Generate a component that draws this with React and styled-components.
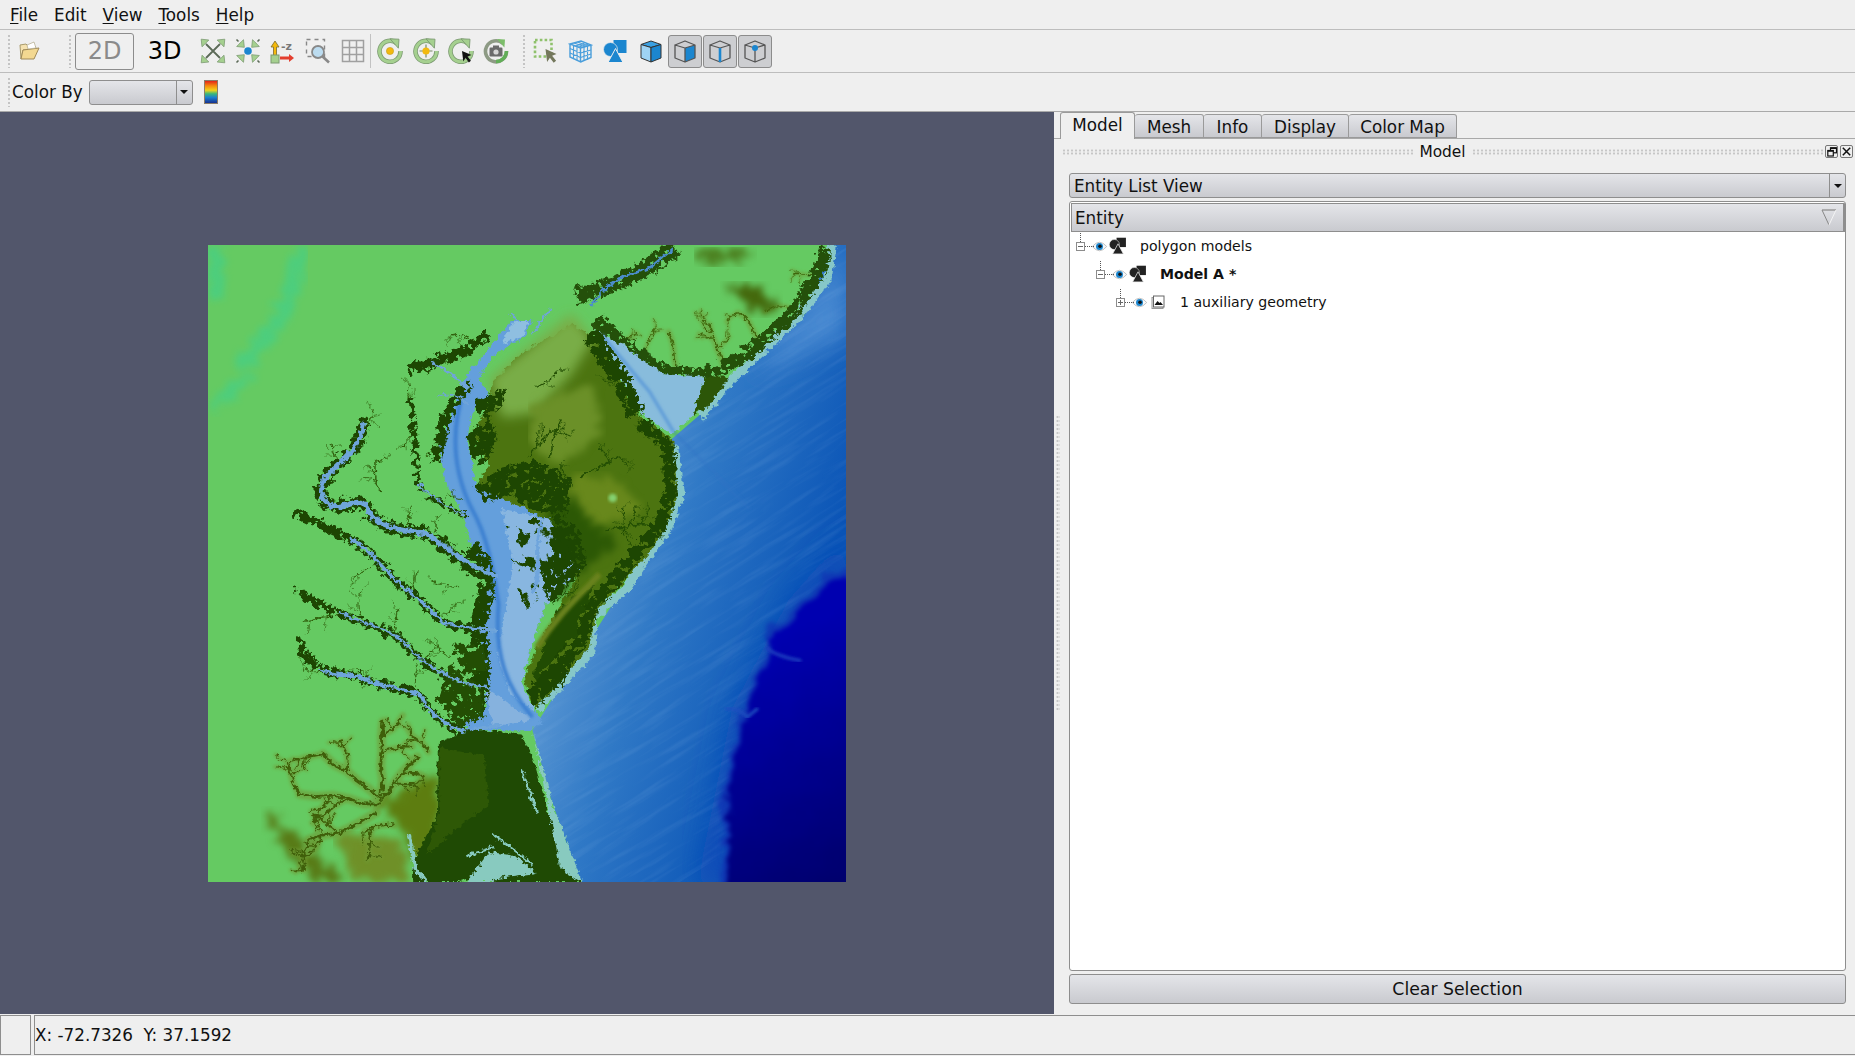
import React from 'react';
import styled, { createGlobalStyle } from 'styled-components';

const GlobalStyle = createGlobalStyle`
  html, body {
    margin: 0;
    padding: 0;
    background: #efefef;
    overflow: hidden;
  }
  * { box-sizing: border-box; }
`;

const bevel = 'linear-gradient(#e4e5e9, #c9cacf)';

const Window = styled.div`
  width: 1855px;
  height: 1056px;
  display: flex;
  flex-direction: column;
  background: #efefef;
  color: #111;
  font-family: 'DejaVu Sans', sans-serif;
  font-size: 16.8px;
`;

const MenuBar = styled.div`
  height: 30px;
  flex: none;
  display: flex;
  align-items: center;
  padding-left: 10px;
  gap: 16px;
  border-bottom: 1px solid #bdbdbd;
`;

const MenuItem = styled.span`
  u { text-underline-offset: 2px; }
`;

const ToolBar = styled.div`
  height: 43px;
  flex: none;
  display: flex;
  align-items: center;
  padding-left: 7px;
  border-bottom: 1px solid #bdbdbd;
`;

const Grip = styled.div`
  width: 5px;
  height: 34px;
  flex: none;
  margin-left: ${(p) => p.$left || 0}px;
  margin-right: ${(p) => p.$right || 0}px;
  background-image: radial-gradient(circle, #c4c4c4 1.1px, transparent 1.3px);
  background-size: 4px 4px;
`;

const Separator = styled.div`
  width: 1px;
  height: 34px;
  flex: none;
  background: #c2c2c2;
`;

const ModeButton = styled.div`
  width: 59px;
  height: 37px;
  flex: none;
  display: flex;
  align-items: center;
  justify-content: center;
  font-size: 24px;
  border-radius: 3px;
  color: ${(p) => (p.$active ? '#8a8a8a' : '#000')};
  border: ${(p) => (p.$active ? '1.5px solid #8c8c8c' : '1.5px solid transparent')};
  margin-right: ${(p) => p.$right || 0}px;
`;

const Tool = styled.div`
  width: ${(p) => p.$w || 35}px;
  height: 33px;
  flex: none;
  display: flex;
  align-items: center;
  justify-content: center;
`;

const ToggleTool = styled(Tool)`
  width: 34px;
  margin-right: 1px;
  background: #cdced1;
  border: 1px solid #8c8c8c;
  border-radius: 3px;
`;

const ColorRow = styled.div`
  height: 39px;
  flex: none;
  display: flex;
  align-items: center;
  padding-left: 7px;
  border-bottom: 1px solid #a9a9a9;
`;

const ColorGrip = styled(Grip)`
  height: 30px;
  margin-right: -5px;
`;

const ColorLabel = styled.span`
  margin-left: 5px;
  margin-right: 6px;
`;

const Combo = styled.div`
  display: flex;
  align-items: stretch;
  flex: none;
  width: ${(p) => (p.$wide ? 'auto' : '104px')};
  height: 25px;
  background: ${bevel};
  border: 1px solid #8e8e8e;
  border-radius: 3px;
`;

const ComboText = styled.span`
  flex: 1;
  padding-left: 4px;
  line-height: 25px;
`;

const ComboArrow = styled.div`
  width: 16px;
  flex: none;
  border-left: 1px solid #8e8e8e;
  display: flex;
  align-items: center;
  justify-content: center;
  &::after {
    content: '';
    border: 4px solid transparent;
    border-top: 4px solid #111;
    border-bottom: 0;
  }
`;

const ColorSwatch = styled.div`
  width: 14px;
  height: 24px;
  margin-left: 11px;
  border: 1px solid #8b7d68;
  background: linear-gradient(#e2231a, #f58a0c 22%, #f2d21a 42%, #3cb878 58%, #1b7fd0 75%, #17308f);
`;

const Main = styled.div`
  height: 902px;
  flex: none;
  display: flex;
`;

const Viewport = styled.div`
  width: 1054px;
  flex: none;
  background: #52566b;
  display: flex;
  align-items: center;
  justify-content: center;
`;

const Panel = styled.div`
  flex: 1;
  min-width: 0;
  display: flex;
  flex-direction: column;
`;

const TabBar = styled.div`
  height: 27px;
  flex: none;
  display: flex;
  align-items: flex-end;
  padding-left: 6px;
  border-bottom: 1px solid #a9a9a9;
  position: relative;
`;

const Tab = styled.div`
  width: ${(p) => p.$w}px;
  height: ${(p) => (p.$active ? 27 : 24)}px;
  margin-bottom: ${(p) => (p.$active ? -1 : 0)}px;
  text-align: center;
  line-height: 25px;
  background: ${(p) => (p.$active ? '#efefef' : bevel)};
  border: 1px solid #9a9a9a;
  border-left-width: ${(p) => (p.$active ? 1 : 0)}px;
  border-bottom: ${(p) => (p.$active ? 0 : undefined)};
  border-radius: 3px 3px 0 0;
  position: relative;
`;

const DockTitle = styled.div`
  height: 23px;
  flex: none;
  display: flex;
  align-items: center;
  padding-left: 8px;
  padding-right: 2px;
  padding-top: 2px;
  font-size: 15.4px;
`;

const DockGrip = styled.div`
  flex: 1;
  height: 6px;
  background-image: radial-gradient(circle, #c6c6c6 1px, transparent 1.2px);
  background-size: 4px 3px;
`;

const DockName = styled.span`
  margin: 0 6px;
`;

const DockButton = styled.div`
  width: 13px;
  height: 13px;
  flex: none;
  margin-left: 2px;
  border: 1px solid #777;
  border-radius: 2px;
  display: flex;
  align-items: center;
  justify-content: center;
`;

const DockBody = styled.div`
  flex: 1;
  min-height: 0;
  display: flex;
  padding-right: 9px;
`;

const Splitter = styled.div`
  width: 15px;
  flex: none;
  display: flex;
  align-items: center;
  padding-bottom: 52px;
  &::before {
    content: '';
    width: 4px;
    height: 295px;
    margin-left: 2px;
    background-image: radial-gradient(circle, #c6c6c6 1px, transparent 1.2px);
    background-size: 3px 4px;
  }
`;

const DockContent = styled.div`
  flex: 1;
  min-width: 0;
  display: flex;
  flex-direction: column;
  padding-top: 11px;
`;

const TreeBox = styled.div`
  margin-top: 3px;
  height: 770px;
  flex: none;
  background: #fff;
  border: 1px solid #8e8e8e;
  border-radius: 3px;
  overflow: hidden;
`;

const TreeHeader = styled.div`
  height: 29px;
  margin: 1px 0 0 1px;
  display: flex;
  align-items: center;
  justify-content: space-between;
  padding: 0 6px 0 3px;
  background: ${bevel};
  border: 1px solid #8e8e8e;
  border-width: 1px 2px 1px 1px;
`;

const TreeRow = styled.div`
  height: 28px;
  display: flex;
  align-items: center;
  padding-left: ${(p) => 6 + p.$depth * 20}px;
  font-size: 14.1px;
  font-weight: ${(p) => (p.$bold ? 700 : 400)};
`;

const Expander = styled.div`
  width: 9px;
  height: 9px;
  flex: none;
  border: 1px solid #8c8c8c;
  position: relative;
  &::before {
    content: '';
    position: absolute;
    left: 3px;
    top: -10px;
    height: 9px;
    border-left: 1px dotted #555;
  }
  &::after {
    content: '';
    position: absolute;
    left: 8px;
    top: 3px;
    width: 9px;
    border-top: 1px dotted #555;
  }
`;

const ExpanderMark = styled.div`
  position: absolute;
  left: 1px;
  top: 3px;
  width: 5px;
  height: 1px;
  background: #666;
  ${(p) => p.$plus && `
    &::after {
      content: '';
      position: absolute;
      left: 2px;
      top: -2px;
      width: 1px;
      height: 5px;
      background: #666;
    }
  `}
`;

const RowEye = styled.div`
  margin-left: 7px;
  width: 15px;
  flex: none;
  display: flex;
`;

const RowIcon = styled.div`
  width: 18px;
  margin-left: 2px;
  flex: none;
  display: flex;
  justify-content: center;
`;

const RowLabel = styled.span`
  margin-left: 13px;
  white-space: nowrap;
`;

const ClearButton = styled.div`
  height: 30px;
  margin-top: 3px;
  flex: none;
  text-align: center;
  line-height: 28px;
  font-size: 17.3px;
  background: ${bevel};
  border: 1px solid #8e8e8e;
  border-radius: 3px;
`;

const StatusBar = styled.div`
  flex: 1;
  display: flex;
  gap: 3px;
  padding: 1px 0;
`;

const StatusCell = styled.div`
  width: ${(p) => (p.$fill ? 'auto' : '31px')};
  flex: ${(p) => (p.$fill ? 1 : 'none')};
  display: flex;
  align-items: center;
  border: 1px solid #8e8e8e;
  border-width: 1px 0 1px 1px;
  ${(p) => !p.$fill && 'border-right-width: 1px;'}
`;

/* ---------- toolbar icons ---------- */

const green = '#a5d08f';
const greenEdge = '#7c9a72';
const blue = '#1b86cf';

const FolderIcon = () => (
  <svg width="24" height="24" viewBox="0 0 24 24">
    <path d="M3 6l6-1 2 2 7 0 1 3-13 1-2 9z" fill="#f5e2b0" stroke="#a89a6c" />
    <path d="M6 11l16-2-5 11H4z" fill="#f3d891" stroke="#a08a58" />
    <path d="M10 6l7-3 2 6-8 1z" fill="#fff" stroke="#b0a888" strokeWidth=".7" />
  </svg>
);

const Head = ({ x, y, r }) => (
  <path d="M-6 -6L3.5 -5 .8 -2.2 -2.2 .8 -5 3.5z" transform={`translate(${x} ${y}) rotate(${r}) scale(.8)`} fill={green} stroke={greenEdge} strokeWidth="1" />
);

const FitIcon = () => (
  <svg width="26" height="26" viewBox="0 0 26 26">
    <path d="M6 6L20 20M20 6L6 20" stroke="#5c6a58" strokeWidth="1.8" />
    <Head x={6} y={6} r={0} />
    <Head x={20} y={6} r={90} />
    <Head x={20} y={20} r={180} />
    <Head x={6} y={20} r={270} />
  </svg>
);

const ShrinkIcon = () => (
  <svg width="26" height="26" viewBox="0 0 26 26">
    <Head x={4.5} y={4.5} r={180} />
    <Head x={21.5} y={4.5} r={270} />
    <Head x={21.5} y={21.5} r={0} />
    <Head x={4.5} y={21.5} r={90} />
    <path d="M1.5 1.5L3.5 3.5M24.5 1.5L22.5 3.5M24.5 24.5L22.5 22.5M1.5 24.5L3.5 22.5" stroke="#5c6a58" strokeWidth="1.6" />
    <circle cx="13" cy="13" r="3.8" fill={blue} />
  </svg>
);

const AxesIcon = () => (
  <svg width="26" height="26" viewBox="0 0 26 26">
    <path d="M5 3L1 9h2.5v9h3V9H9z" fill="#f4b90c" stroke="#7a6a30" strokeWidth=".8" />
    <path d="M10 18.5h9V16l5 4-5 4v-2.5h-9z" fill="#e33e2e" />
    <rect x="1" y="17" width="8" height="8" fill={green} stroke={greenEdge} />
    <text x="11" y="12" fontSize="11" fontFamily="DejaVu Sans" fontWeight="700" fill="#777">-z</text>
  </svg>
);

const ZoomIcon = () => (
  <svg width="26" height="26" viewBox="0 0 26 26">
    <rect x="1.5" y="1.5" width="18" height="17" fill="none" stroke="#888" strokeWidth="1.4" strokeDasharray="4 4" />
    <circle cx="13" cy="14" r="6" fill="#bcdcf0" stroke="#888" strokeWidth="1.8" />
    <path d="M17.5 18.5L24 24.5" stroke="#888" strokeWidth="2.6" />
  </svg>
);

const GridIcon = () => (
  <svg width="24" height="24" viewBox="0 0 24 24">
    <path d="M1.5 1.5h21v21h-21zM1.5 8.5h21M1.5 15.5h21M8.5 1.5v21M15.5 1.5v21" fill="none" stroke="#a0a0a0" strokeWidth="1.5" />
  </svg>
);

const Ring = ({ children }) => (
  <svg width="26" height="26" viewBox="0 0 26 26">
    <path d="M20 5.5A10.5 10.5 0 1 0 23.5 13" fill="none" stroke={greenEdge} strokeWidth="4.6" />
    <path d="M20 5.5A10.5 10.5 0 1 0 23.5 13" fill="none" stroke={green} strokeWidth="3" />
    <path d="M13 .8l9 .4-.6 9z" fill={green} stroke={greenEdge} strokeWidth=".9" />
    {children}
  </svg>
);

const RotateDot = () => (
  <Ring><circle cx="13" cy="13" r="3.6" fill="#f2b90f" stroke="#c29a20" strokeWidth=".6" /></Ring>
);

const RotateTarget = () => (
  <Ring>
    <path d="M13 6.5v13M6.5 13h13" stroke="#7a8a68" strokeWidth="1.2" />
    <circle cx="13" cy="13" r="3.6" fill="#f2b90f" />
  </Ring>
);

const RotatePointer = () => (
  <Ring><path d="M14 13l9.5 4-4 1.4 3.4 4.4-2 1.6-3.4-4.6-2.2 3.6z" fill="#111" /></Ring>
);

const RotateCamera = () => (
  <svg width="26" height="26" viewBox="0 0 26 26">
    <path d="M20 5.5A10.5 10.5 0 1 0 23.5 13" fill="none" stroke="#8d9a84" strokeWidth="3.6" />
    <path d="M23.5 13A10.5 10.5 0 0 1 13 23.5" fill="none" stroke="#62ae58" strokeWidth="3.4" />
    <path d="M14 1l8 .6-.6 8z" fill="#7cbd6a" />
    <rect x="6.5" y="9.5" width="13" height="9" rx="1.2" fill="#6b6b6b" />
    <rect x="10" y="7.5" width="6" height="3" fill="#6b6b6b" />
    <circle cx="13" cy="14" r="2.6" fill="#d6d6d6" />
  </svg>
);

const SelectIcon = () => (
  <svg width="26" height="26" viewBox="0 0 26 26">
    <rect x="2" y="2" width="16.5" height="16.5" fill="none" stroke="#8fc16c" strokeWidth="2.6" strokeDasharray="2.6 2.2" />
    <path d="M12.5 11l11 5-4.4 1.8 4 5-2.4 2-3.8-5-2.8 4.2z" fill="#74785c" />
  </svg>
);

const MeshIcon = () => (
  <svg width="25" height="25" viewBox="0 0 25 25" fill="none" stroke="#4a9edb" strokeWidth="1.1">
    <path d="M12.5 9L23 6 13 2 2 5zM2 5v13l10.5 5V9M23 6v12.5L12.5 23" strokeWidth="1.4" />
    <path d="M5.5 6.7v13M9 8.2v13M2 9.5l10.5 4.4M2 14l10.5 4.4M16 8v14M19.5 7v13.7M12.5 14L23 11M12.5 18.5L23 15M6 4l11 3.8M9.5 3l10.5 4M6.5 7.3l10-3M10 8.2l10-3" />
  </svg>
);

const ShapesIcon = ({ color = blue, size = 25 }) => (
  <svg width={size} height={size} viewBox="0 0 25 25">
    <rect x="10.5" y="1" width="13" height="13" fill={color} />
    <circle cx="7.5" cy="10.5" r="7" fill={color} stroke="#efefef" strokeWidth=".7" />
    <path d="M12.5 9.5L20 23.5H5z" fill={color} stroke="#efefef" strokeWidth="1" />
  </svg>
);

const CubeIcon = () => (
  <svg width="24" height="25" viewBox="0 0 24 25">
    <path d="M12 8.5L22 5.5 12 2 2 5.5z" fill="#3aa0e2" stroke="#333" strokeLinejoin="round" />
    <path d="M2 5.5l10 3V23L2 19z" fill="#9ed3f4" stroke="#333" strokeLinejoin="round" />
    <path d="M22 5.5l-10 3V23l10-4z" fill={blue} stroke="#333" strokeLinejoin="round" />
  </svg>
);

const BoxIcon = ({ mode }) => (
  <svg width="24" height="25" viewBox="0 0 24 25">
    {mode === 'face' && <path d="M22 6l-10 3v14l10-4z" fill={blue} />}
    <path d="M12 9L22 6 12 2 2 6zM2 6l10 3v14L2 19zM22 6v13l-10 4" fill="none" stroke="#555" strokeWidth="1.3" strokeLinejoin="round" />
    {mode === 'edge' && <path d="M12 9v14" stroke={blue} strokeWidth="2.6" />}
    {mode === 'point' && <circle cx="12" cy="9" r="3" fill={blue} />}
  </svg>
);

const EyeIcon = () => (
  <svg width="15" height="11" viewBox="0 0 15 11">
    <path d="M.3 5.5Q7.5 -3 14.7 5.5Q7.5 14 .3 5.5z" fill="#f6f8fa" stroke="#b4b4b4" strokeWidth=".8" />
    <circle cx="7.5" cy="5.5" r="3.5" fill={blue} />
    <circle cx="8" cy="5.2" r="1.8" fill="#111" />
  </svg>
);

const PictureIcon = () => (
  <svg width="14" height="14" viewBox="0 0 14 14">
    <rect x="1" y="2.5" width="11" height="11" fill="#e6e6e6" stroke="#999" />
    <rect x="2.5" y="1" width="10.5" height="11" fill="#fff" stroke="#666" />
    <path d="M3.5 10l3-4 2 2 1-1 2.5 3z" fill="#111" />
  </svg>
);

const SortIcon = () => (
  <svg width="16" height="17" viewBox="0 0 16 17">
    <path d="M1 1h14" stroke="#9a9a9a" strokeWidth="1.4" />
    <path d="M1 1l7 15" stroke="#888" strokeWidth="1" />
    <path d="M15 1L8 16" stroke="#f4f4f4" strokeWidth="1" />
  </svg>
);

const FloatIcon = () => (
  <svg width="10" height="10" viewBox="0 0 10 10" fill="none" stroke="#111" strokeWidth="1.2">
    <rect x="3.5" y=".8" width="6" height="5" />
    <rect x=".8" y="3.5" width="5.5" height="5.5" fill="#efefef" />
    <path d="M3.5 1.2h6M.8 4h5.5" strokeWidth="1.6" />
  </svg>
);

const CloseIcon = () => (
  <svg width="9" height="9" viewBox="0 0 9 9">
    <path d="M.8 .8L8.2 8.2M8.2 .8L.8 8.2" stroke="#111" strokeWidth="1.5" />
  </svg>
);

/* ---------- terrain picture, coordinates follow the 3x crop ---------- */

// small seeded random so the drainage looks the same every run
let seed = 41;
const rnd = () => {
  seed = (seed * 1664525 + 1013904223) % 4294967296;
  return seed / 4294967296;
};

// grows a branching stream from (x, y) heading along angle (degrees)
const dendrite = (x, y, angle, len, depth, out) => {
  const steps = 5;
  const stepLen = len / steps;
  let a = (angle * Math.PI) / 180;
  let cx = x;
  let cy = y;
  let d = `M${x.toFixed(0)} ${y.toFixed(0)}`;
  for (let i = 0; i < steps; i += 1) {
    a += (rnd() - 0.5) * 0.7;
    cx += Math.cos(a) * stepLen;
    cy += Math.sin(a) * stepLen;
    d += `L${cx.toFixed(0)} ${cy.toFixed(0)}`;
    if (depth > 0 && i > 0 && rnd() > 0.3) {
      const side = rnd() > 0.5 ? 1 : -1;
      dendrite(cx, cy, (a * 180) / Math.PI + side * (35 + rnd() * 35), len * 0.42, depth - 1, out);
    }
  }
  out.push({ d, w: depth + 1.5 });
};

const grow = (list) => {
  const out = [];
  list.forEach(([x, y, a, len, depth]) => dendrite(x, y, a, len, depth, out));
  return out;
};

const rivers = [
  { d: 'M400 445C395 500 350 530 320 560C292 595 300 630 340 636C380 628 395 610 412 645C435 682 480 690 540 695C590 722 625 765 705 795', w: 11 },
  { d: 'M372 710C410 730 440 770 470 800C510 840 550 860 580 900C620 915 650 915 705 920', w: 7 },
  { d: 'M345 880C400 900 440 915 482 935C530 990 590 1040 690 1052', w: 5 },
  { d: 'M300 1012C330 1025 360 1020 385 1025C430 1050 500 1055 532 1068C550 1112 590 1140 630 1152L710 1140', w: 8 },
  { d: 'M528 585C570 622 600 642 636 656', w: 4 },
  { d: 'M560 305C590 320 620 340 640 360', w: 6 },
  { d: 'M575 380C600 372 625 380 640 400', w: 4 },
  { d: 'M740 190L760 215', w: 4 },
  { d: 'M830 180L790 235', w: 4 },
];

const fringes = [
  ['M400 445C395 500 350 530 320 560C292 595 300 630 340 636C380 628 395 610 412 645C435 682 480 690 540 695C590 722 625 765 660 780', 28],
  ['M250 650C300 680 340 695 372 710C410 730 440 770 470 800C510 840 550 860 580 900C620 915 650 915 680 920', 20],
  ['M250 830C300 870 400 900 482 935C530 990 590 1040 660 1052', 18],
  ['M255 945C265 1000 310 1020 385 1025C430 1050 500 1055 532 1068C550 1112 590 1140 630 1152', 18],
  ['M510 390C522 470 520 540 530 592C570 622 600 642 636 656', 12],
  ['M520 315C570 300 620 290 680 245', 26],
  ['M640 360C590 400 580 470 570 520', 26],
  ['M660 740C690 780 690 830 665 900C670 960 680 1020 660 1100', 40],
];

const westStreams = grow([
  [395, 470, -60, 60, 1], [350, 530, 200, 50, 1], [440, 600, -110, 70, 2], [500, 680, -70, 50, 1], [560, 700, -60, 45, 1],
  [440, 770, 190, 70, 1], [510, 840, -60, 55, 1], [580, 890, -60, 50, 1], [620, 820, 200, 60, 1],
  [400, 900, -120, 70, 1], [470, 925, -70, 55, 1], [540, 1000, -70, 55, 1], [350, 880, 170, 90, 1],
  [330, 1020, 200, 70, 1], [440, 1050, 210, 70, 1], [520, 1060, -100, 60, 1], [600, 980, 210, 60, 1],
  [510, 400, -100, 50, 1], [515, 470, 170, 35, 1], [545, 520, -50, 50, 1],
  [660, 250, 200, 60, 1], [600, 300, 160, 50, 1], [630, 620, -150, 40, 1],
]);

const jerseyStreams = grow([
  [1050, 280, -80, 60, 1], [1120, 310, -90, 80, 2], [1230, 310, -90, 100, 2], [1310, 250, -130, 80, 2],
  [1390, 180, -160, 70, 1], [1440, 100, -170, 45, 1], [1000, 250, -30, 35, 1],
]);

const delmarvaStreams = grow([
  [900, 570, -50, 100, 2], [960, 690, -20, 100, 2], [1000, 700, -60, 60, 1], [830, 520, -70, 90, 2],
  [780, 520, -60, 80, 2], [800, 360, -30, 60, 1], [1060, 480, -120, 50, 1], [1000, 360, -150, 50, 1],
  [870, 590, -120, 50, 1], [850, 850, -50, 50, 1],
]);

const virginiaStreams = grow([
  [440, 1320, 195, 190, 2], [440, 1310, 235, 170, 2], [440, 1300, 272, 170, 2], [440, 1310, -45, 130, 2],
  [430, 1340, 165, 170, 2], [470, 1370, 170, 70, 1], [420, 1380, 120, 70, 1], [550, 1200, 220, 70, 1],
]);

const Streams = ({ list, color, scale = 1 }) => (
  <g fill="none" stroke={color} strokeLinecap="round" strokeLinejoin="round">
    {list.map((s, i) => <path key={i} d={s.d} strokeWidth={s.w * scale} />)}
  </g>
);

const TerrainMap = () => (
  <svg width="638" height="637" viewBox="42 32 1471 1468" preserveAspectRatio="none">
    <defs>
      <filter id="rough" x="-5%" y="-5%" width="110%" height="110%" colorInterpolationFilters="sRGB">
        <feTurbulence type="fractalNoise" baseFrequency="0.035" numOctaves="4" seed="7" result="n" />
        <feDisplacementMap in="SourceGraphic" in2="n" scale="34" xChannelSelector="R" yChannelSelector="G" />
      </filter>
      <filter id="fine" x="-5%" y="-5%" width="110%" height="110%" colorInterpolationFilters="sRGB">
        <feTurbulence type="fractalNoise" baseFrequency="0.09" numOctaves="3" seed="3" result="n" />
        <feDisplacementMap in="SourceGraphic" in2="n" scale="16" xChannelSelector="R" yChannelSelector="G" />
      </filter>
      <filter id="speckle" x="-5%" y="-5%" width="110%" height="110%" colorInterpolationFilters="sRGB">
        <feTurbulence type="fractalNoise" baseFrequency="0.07" numOctaves="4" seed="11" result="n" />
        <feDisplacementMap in="SourceGraphic" in2="n" scale="30" xChannelSelector="R" yChannelSelector="G" result="moved" />
        <feColorMatrix in="n" type="matrix" values="0 0 0 0 0  0 0 0 0 0  0 0 0 0 0  16 0 0 0 -5" result="mask" />
        <feComposite in="moved" in2="mask" operator="in" />
      </filter>
      <filter id="sparse" x="-15%" y="-15%" width="130%" height="130%" colorInterpolationFilters="sRGB">
        <feTurbulence type="fractalNoise" baseFrequency="0.028" numOctaves="5" seed="23" result="n" />
        <feDisplacementMap in="SourceGraphic" in2="n" scale="70" xChannelSelector="G" yChannelSelector="R" result="moved" />
        <feColorMatrix in="n" type="matrix" values="0 0 0 0 0  0 0 0 0 0  0 0 0 0 0  18 0 0 0 -9.6" result="mask" />
        <feComposite in="moved" in2="mask" operator="in" />
      </filter>
      <filter id="mottle" x="-5%" y="-5%" width="110%" height="110%" colorInterpolationFilters="sRGB">
        <feTurbulence type="fractalNoise" baseFrequency="0.05" numOctaves="3" seed="5" result="n" />
        <feDisplacementMap in="SourceGraphic" in2="n" scale="60" xChannelSelector="R" yChannelSelector="G" />
        <feGaussianBlur stdDeviation="8" />
      </filter>
      <filter id="stairs" x="-5%" y="-5%" width="110%" height="110%" colorInterpolationFilters="sRGB">
        <feTurbulence type="fractalNoise" baseFrequency="0.02" numOctaves="4" seed="31" result="n" />
        <feDisplacementMap in="SourceGraphic" in2="n" scale="50" xChannelSelector="R" yChannelSelector="G" />
        <feGaussianBlur stdDeviation="5" />
      </filter>
      <filter id="streaks" colorInterpolationFilters="sRGB">
        <feTurbulence type="fractalNoise" baseFrequency="0.006 0.08" numOctaves="3" seed="9" />
        <feColorMatrix type="matrix" values="0 0 0 0 .8  0 0 0 0 .9  0 0 0 0 1  3 0 0 0 -1.35" />
        <feGaussianBlur stdDeviation="1" />
      </filter>
      <filter id="soft"><feGaussianBlur stdDeviation="14" /></filter>
      <filter id="softer"><feGaussianBlur stdDeviation="30" /></filter>
      <filter id="edge"><feGaussianBlur stdDeviation="4" /></filter>
      <linearGradient id="sea" gradientUnits="userSpaceOnUse" x1="880" y1="560" x2="1480" y2="760">
        <stop offset="0" stopColor="#6aa2d8" />
        <stop offset=".45" stopColor="#3079c6" />
        <stop offset="1" stopColor="#0a54b6" />
      </linearGradient>
      <linearGradient id="deep" gradientUnits="userSpaceOnUse" x1="1250" y1="1000" x2="1513" y2="1500">
        <stop offset="0" stopColor="#0000b0" />
        <stop offset="1" stopColor="#00006c" />
      </linearGradient>
      <clipPath id="oceanClip">
        <path d="M1480 32H1513V1500H900L830 1300 790 1150 1000 820 1120 620 1110 480 1180 420 1300 290 1420 190z" />
      </clipPath>
      <clipPath id="frame">
        <rect x="42" y="32" width="1471" height="1468" />
      </clipPath>
    </defs>

    <g clipPath="url(#frame)">
      <rect x="42" y="32" width="1471" height="1468" fill="#65ca62" />
      <g filter="url(#mottle)" fill="none" stroke="#47cf84" opacity=".8" strokeLinecap="round">
        <path d="M60 50L60 140" strokeWidth="36" />
        <path d="M260 50L215 190 130 300" strokeWidth="38" />
        <path d="M50 410L130 340" strokeWidth="22" />
      </g>

      {/* ocean */}
      <path d="M1480 32H1513V1500H900L830 1300 790 1150 1000 820 1120 620 1110 480 1180 420 1300 290 1420 190z" fill="url(#sea)" />
      <path d="M1513 30V240L1300 330 1420 170z" fill="#4a8ad2" filter="url(#softer)" clipPath="url(#oceanClip)" />
      <path d="M1513 700V1000L1260 1500H1170L1250 1100 1380 850z" fill="#0a4cb8" filter="url(#softer)" />
      <g clipPath="url(#oceanClip)">
        <rect x="600" y="-200" width="1400" height="1400" transform="rotate(-32 1200 700)" filter="url(#streaks)" opacity=".07" />
      </g>
      <path d="M1640 770L1470 790 1390 870 1320 930 1335 965 1280 1090 1240 1230 1215 1640H1640z" fill="#1034b4" filter="url(#stairs)" opacity=".8" />
      <path d="M1640 795L1480 802 1400 880 1330 940 1345 965 1290 1090 1250 1230 1228 1640H1640z" fill="url(#deep)" filter="url(#stairs)" />
      <path d="M1235 1100Q1270 1100 1285 1120L1310 1100" fill="none" stroke="#1f50c0" strokeWidth="7" filter="url(#edge)" />
      <path d="M1330 960Q1350 980 1410 990" fill="none" stroke="#1f40c0" strokeWidth="7" filter="url(#edge)" />

      {/* coast strips */}
      <g filter="url(#fine)" fill="none" stroke="#86c7c8">
        <path d="M1482 32L1470 110 1400 200 1300 295 1240 350 1180 428" strokeWidth="20" />
        <path d="M1115 490L1130 610 1100 690 1040 770 1010 820 930 890 925 970 840 1060 800 1100" strokeWidth="20" />
      </g>
      <path d="M790 1155L840 1330 905 1500H640L830 1340z" fill="#88cabf" filter="url(#fine)" />

      {/* new jersey */}
      <g filter="url(#edge)" opacity=".55"><Streams list={jerseyStreams} color="#6f9a34" scale={4} /></g>
      <path d="M1230 130C1280 100 1345 140 1360 195L1290 175z" fill="#44680c" filter="url(#mottle)" />
      <path d="M1170 40H1300L1270 75 1190 80z" fill="#4c8020" filter="url(#mottle)" />
      <g filter="url(#fine)"><Streams list={jerseyStreams} color="#3f660c" /></g>
      <g filter="url(#speckle)" fill="none" stroke="#24500a">
        <path d="M890 150L985 120 1060 80 1120 40" strokeWidth="38" />
        <path d="M935 205L1000 265 1090 325 1190 335" strokeWidth="36" />
        <path d="M1190 335L1290 280 1390 190 1455 90 1465 40" strokeWidth="30" />
      </g>
      <path d="M1186 335L1245 335 1195 405 1160 425z" fill="#2c5608" filter="url(#fine)" />
      <path d="M925 170L960 130 1000 105 1060 85 1115 40" fill="none" stroke="#4b8ccc" strokeWidth="6" filter="url(#fine)" />

      {/* delaware bay */}
      <path d="M930 225L990 325 1040 420 1110 470 1160 425 1186 335 1090 330 1000 265z" fill="#88bcdc" filter="url(#fine)" />
      <path d="M950 240L1060 370 1115 462" fill="none" stroke="#5c9ad8" strokeWidth="7" filter="url(#edge)" />
      <path d="M1115 462L1290 640" stroke="#2f72c4" strokeWidth="5" opacity=".55" filter="url(#edge)" />

      {/* delmarva */}
      <path d="M700 345L760 285 880 215 925 240 985 320 1030 420 1112 480 1125 600 1100 680 1060 740 1000 810 940 870 920 960 850 1040 795 1100 770 1030 800 960 850 870 890 800 820 770 780 720 700 640 660 590 690 540 650 470 690 400z" fill="#4c7410" filter="url(#fine)" />
      <path d="M690 340L880 190 930 250 880 330 800 420 720 430z" fill="#79ad46" filter="url(#soft)" />
      <path d="M790 400L930 350 950 460 860 540 790 500z" fill="#6b9028" filter="url(#mottle)" />
      <path d="M880 570C930 540 1040 580 1040 650C980 690 900 680 870 620z" fill="#68881c" filter="url(#mottle)" />
      <circle cx="975" cy="615" r="10" fill="#84d070" filter="url(#edge)" />
      <path d="M820 640L870 610 930 670 990 720 900 780 850 850 810 800z" fill="#2c5805" filter="url(#mottle)" />
      <g filter="url(#fine)"><Streams list={delmarvaStreams} color="#244f04" /></g>
      <g filter="url(#speckle)" fill="none" stroke="#1d4602">
        <path d="M925 240L985 325 1030 420" strokeWidth="42" />
        <path d="M1040 440L1105 500 1110 600 1085 680 1030 740 985 800 930 860 900 950 840 1020 800 1080" strokeWidth="30" />
      </g>
      <path d="M860 860L930 820 890 930 820 1010 790 1060 810 960z" fill="#214c03" filter="url(#rough)" />
      <path d="M800 960C850 880 900 840 945 790" fill="none" stroke="#69821a" strokeWidth="14" filter="url(#edge)" />

      {/* chesapeake */}
      <g filter="url(#fine)">
        <path d="M740 205L790 205 770 245 700 285 665 340 690 380 650 420 640 480 660 590 830 665 895 780 820 860 775 1000 765 1040 795 1105 815 1130 780 1150 650 1150 620 1135 680 1105 680 1000 665 900 690 810 650 730 630 650 590 580 575 500 600 430 620 370 640 330 690 270z" fill="#649fdc" />
        <path d="M720 640L830 665 895 780 820 860 775 1000 765 1040 795 1105 740 1070 710 980 730 860 745 760z" fill="#88b6e0" />
        <path d="M680 1050L790 1125 700 1145z" fill="#86b2de" />
      </g>
      <path d="M630 370C600 470 610 560 650 640C690 710 700 790 712 860C702 980 730 1050 790 1120" fill="none" stroke="#3a7fd0" strokeWidth="9" filter="url(#edge)" />
      <g filter="url(#speckle)" fill="#1d4602">
        <path d="M655 590L720 545 800 530 880 570 870 650 800 650 740 605 690 625z" />
        <path d="M640 470L690 430 710 480 680 540 650 520z" />
        <path d="M655 395L730 360 720 400 680 440z" />
        <path d="M840 650L900 690 915 770 835 860 810 790 840 740z" />
        <path d="M775 1060L830 1000 880 950 900 960 860 1040 800 1095z" />
      </g>
      <path d="M750 660L860 690 880 780 820 850 770 880 755 780z" fill="#1d4602" filter="url(#sparse)" />
      <path d="M815 665C790 720 815 770 790 835" fill="none" stroke="#6fa5dc" strokeWidth="8" filter="url(#fine)" />

      {/* west shore and tidal rivers */}
      <g filter="url(#fine)"><Streams list={westStreams} color="#2e5a08" scale={.9} /></g>
      <g filter="url(#speckle)" fill="none" strokeLinecap="round" stroke="#1d4602">
        {fringes.map(([d, w]) => <path key={d} d={d} strokeWidth={w} />)}
      </g>
      <g filter="url(#speckle)" fill="#234e04">
        <path d="M600 1000L670 1050 680 1120 625 1145 570 1080z" />
        <path d="M605 950L680 955 690 1010 630 1020z" />
      </g>
      <g filter="url(#fine)" fill="none" strokeLinecap="round" stroke="#6fa5da">
        {rivers.map((r) => <path key={r.d} d={r.d} strokeWidth={r.w} />)}
      </g>
      <path d="M745 210L780 205 765 245 720 260z" fill="#8fbfe0" filter="url(#fine)" />

      {/* virginia */}
      <path d="M175 1335L250 1395 355 1500H295L215 1420z" fill="#587a16" filter="url(#mottle)" />
      <path d="M340 1390L480 1400 515 1500H380z" fill="#6f9028" filter="url(#mottle)" />
      <g filter="url(#edge)" opacity=".6"><Streams list={virginiaStreams} color="#6f9a34" scale={6} /></g>
      <path d="M430 1320L575 1250 580 1370 530 1470 490 1380z" fill="#5d7d10" filter="url(#mottle)" />
      <g filter="url(#fine)"><Streams list={virginiaStreams} color="#3f5f0a" scale={1.8} /></g>
      <g filter="url(#fine)">
        <path d="M572 1180L650 1148 765 1160 790 1210 830 1350 855 1470 905 1500H700L760 1450 650 1490 620 1500H515L515 1450 570 1350z" fill="#1f4a04" />
        <path d="M575 1190L680 1210 690 1320 610 1380 545 1440 575 1340z" fill="#2e5806" />
        <path d="M690 1430L750 1440 800 1480 640 1498 660 1470z" fill="#88cabf" />
        <path d="M700 1390L790 1460M765 1240L800 1340M640 1440L700 1420" stroke="#88cabf" strokeWidth="6" />
        <path d="M505 1390L520 1470 545 1500" fill="none" stroke="#88cabf" strokeWidth="9" />
      </g>
    </g>
  </svg>
);

const App = () => (
  <>
    <GlobalStyle />
    <Window>
      <MenuBar>
        <MenuItem><u>F</u>ile</MenuItem>
        <MenuItem>Edit</MenuItem>
        <MenuItem><u>V</u>iew</MenuItem>
        <MenuItem><u>T</u>ools</MenuItem>
        <MenuItem><u>H</u>elp</MenuItem>
      </MenuBar>

      <ToolBar>
        <Grip />
        <Tool $w={34}><FolderIcon /></Tool>
        <Grip $left={22} $right={2} />
        <ModeButton $active $right={1}>2D</ModeButton>
        <ModeButton $right={1}>3D</ModeButton>
        <Tool $w={35}><FitIcon /></Tool>
        <Tool $w={35}><ShrinkIcon /></Tool>
        <Tool $w={35}><AxesIcon /></Tool>
        <Tool $w={35}><ZoomIcon /></Tool>
        <Tool $w={35}><GridIcon /></Tool>
        <Separator />
        <Tool $w={37}><RotateDot /></Tool>
        <Tool $w={35}><RotateTarget /></Tool>
        <Tool $w={35}><RotatePointer /></Tool>
        <Tool $w={35}><RotateCamera /></Tool>
        <Grip $left={9} $right={1} />
        <Tool $w={35}><SelectIcon /></Tool>
        <Tool $w={35}><MeshIcon /></Tool>
        <Tool $w={35}><ShapesIcon /></Tool>
        <Tool $w={35}><CubeIcon /></Tool>
        <ToggleTool><BoxIcon mode="face" /></ToggleTool>
        <ToggleTool><BoxIcon mode="edge" /></ToggleTool>
        <ToggleTool><BoxIcon mode="point" /></ToggleTool>
      </ToolBar>

      <ColorRow>
        <ColorGrip />
        <ColorLabel>Color By</ColorLabel>
        <Combo>
          <ComboText />
          <ComboArrow />
        </Combo>
        <ColorSwatch />
      </ColorRow>

      <Main>
        <Viewport>
          <TerrainMap />
        </Viewport>
        <Panel>
          <TabBar>
            <Tab $active $w={75}>Model</Tab>
            <Tab $w={69}>Mesh</Tab>
            <Tab $w={58}>Info</Tab>
            <Tab $w={87}>Display</Tab>
            <Tab $w={108}>Color Map</Tab>
          </TabBar>
          <DockTitle>
            <DockGrip />
            <DockName>Model</DockName>
            <DockGrip />
            <DockButton><FloatIcon /></DockButton>
            <DockButton><CloseIcon /></DockButton>
          </DockTitle>
          <DockBody>
            <Splitter />
            <DockContent>
              <Combo $wide>
                <ComboText>Entity List View</ComboText>
                <ComboArrow />
              </Combo>
              <TreeBox>
                <TreeHeader>
                  Entity
                  <SortIcon />
                </TreeHeader>
                <TreeRow $depth={0}>
                  <Expander><ExpanderMark /></Expander>
                  <RowEye><EyeIcon /></RowEye>
                  <RowIcon><ShapesIcon color="#222" size={18} /></RowIcon>
                  <RowLabel>polygon models</RowLabel>
                </TreeRow>
                <TreeRow $depth={1} $bold>
                  <Expander><ExpanderMark /></Expander>
                  <RowEye><EyeIcon /></RowEye>
                  <RowIcon><ShapesIcon color="#222" size={18} /></RowIcon>
                  <RowLabel>Model A *</RowLabel>
                </TreeRow>
                <TreeRow $depth={2}>
                  <Expander><ExpanderMark $plus /></Expander>
                  <RowEye><EyeIcon /></RowEye>
                  <RowIcon><PictureIcon /></RowIcon>
                  <RowLabel>1 auxiliary geometry</RowLabel>
                </TreeRow>
              </TreeBox>
              <ClearButton>Clear Selection</ClearButton>
            </DockContent>
          </DockBody>
        </Panel>
      </Main>

      <StatusBar>
        <StatusCell />
        <StatusCell $fill>X: -72.7326&nbsp;&nbsp;Y: 37.1592</StatusCell>
      </StatusBar>
    </Window>
  </>
);

export default App;
